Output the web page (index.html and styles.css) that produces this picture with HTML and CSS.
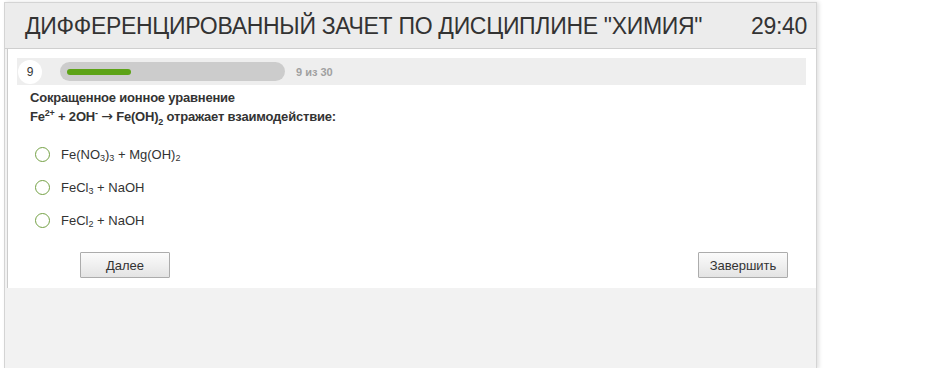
FILE: index.html
```html
<!DOCTYPE html>
<html lang="ru">
<head>
<meta charset="utf-8">
<title>Тест</title>
<link rel="stylesheet" href="styles.css">
</head>
<body>
<div class="wrap">
  <div class="header">
    <div class="title">ДИФФЕРЕНЦИРОВАННЫЙ ЗАЧЕТ ПО ДИСЦИПЛИНЕ "ХИМИЯ"</div>
    <div class="timer">29:40</div>
  </div>
  <div class="panel">
    <div class="progress-row">
      <div class="num">9</div>
      <div class="track"><div class="fill" style="width:64px"></div></div>
      <div class="count">9 из 30</div>
    </div>
    <div class="question">
      <div>Сокращенное ионное уравнение</div>
      <div>Fe<sup>2+</sup> + 2OH<sup>-</sup> <span class="arrow">→</span> Fe(OH)<sub>2</sub> отражает взаимодействие:</div>
    </div>
    <div class="options">
      <label class="option"><span class="radio"></span><span>Fe(NO<sub>3</sub>)<sub>3</sub> + Mg(OH)<sub>2</sub></span></label>
      <label class="option"><span class="radio"></span><span>FeCl<sub>3</sub> + NaOH</span></label>
      <label class="option"><span class="radio"></span><span>FeCl<sub>2</sub> + NaOH</span></label>
    </div>
    <div class="buttons">
      <button class="btn btn-next">Далее</button>
      <button class="btn btn-finish">Завершить</button>
    </div>
  </div>
</div>
</body>
</html>
```
FILE: styles.css
```css
html, body {
  margin: 0;
  padding: 0;
  background: #ffffff;
  font-family: "Liberation Sans", Arial, sans-serif;
  color: #333333;
}
.wrap {
  margin: 2px 0 0 4px;
  width: 811px;
  height: 366px;
  background: #f2f2f2;
  border: 1px solid #d4d4d4;
  border-bottom: none;
  box-shadow: 2px 0 4px rgba(0,0,0,0.12);
}
.header {
  height: 45px;
  background: #ececec;
  border-bottom: 1px solid #cfcfcf;
  display: flex;
  align-items: center;
  justify-content: space-between;
  padding: 0 9px 0 20px;
}
.title {
  font-size: 23px;
  color: #333333;
  letter-spacing: -0.3px;
  padding-top: 1px;
}
.timer {
  font-size: 23px;
  color: #333333;
  letter-spacing: -0.3px;
  padding-top: 1px;
}
.panel {
  margin-left: 2px;
  background: #ffffff;
  border-left: 1px solid #cccccc;
  padding: 9px 10px 10px 9px;
  height: 220px;
}
.progress-row {
  height: 27px;
  background: #eeeeee;
  display: flex;
  align-items: center;
}
.num {
  width: 24px;
  height: 24px;
  margin-left: 1px;
  border-radius: 50%;
  background: #ffffff;
  font-size: 12px;
  color: #333;
  display: flex;
  align-items: center;
  justify-content: center;
}
.track {
  width: 211px;
  height: 19px;
  margin-left: 18px;
  border-radius: 10px;
  background: #cccccc;
  padding: 0 7px;
  display: flex;
  align-items: center;
  box-sizing: content-box;
}
.fill {
  height: 6px;
  border-radius: 3px;
  background: #5da317;
}
.count {
  margin-left: 11px;
  font-size: 11px;
  font-weight: bold;
  color: #a0a0a0;
}
.question {
  margin: 3px 0 0 13px;
  font-size: 13px;
  font-weight: bold;
  letter-spacing: -0.2px;
  line-height: 19px;
  color: #333333;
}
.arrow {
  font-family: "DejaVu Sans", sans-serif;
  font-weight: normal;
  font-size: 14px;
  line-height: 0;
}
sup, sub {
  font-size: 9px;
  line-height: 0;
}
.options {
  margin: 19px 0 0 18px;
  display: flex;
  flex-direction: column;
  gap: 15px;
}
.option {
  display: flex;
  align-items: center;
  gap: 11px;
  height: 18px;
  font-size: 13px;
  color: #333333;
}
.option sub {
  vertical-align: -2px;
}
.radio {
  width: 13px;
  height: 13px;
  border: 1.5px solid #74a145;
  border-radius: 50%;
  flex: none;
}
.buttons {
  display: flex;
  justify-content: space-between;
  margin: 23px 18px 0 63px;
}
.btn {
  height: 26px;
  width: 90px;
  font-family: "Liberation Sans", Arial, sans-serif;
  font-size: 13px;
  color: #333333;
  background: linear-gradient(#fbfbfb, #e4e4e4);
  border: 1px solid #acacac;
  border-radius: 1px;
  padding: 0;
}
```
